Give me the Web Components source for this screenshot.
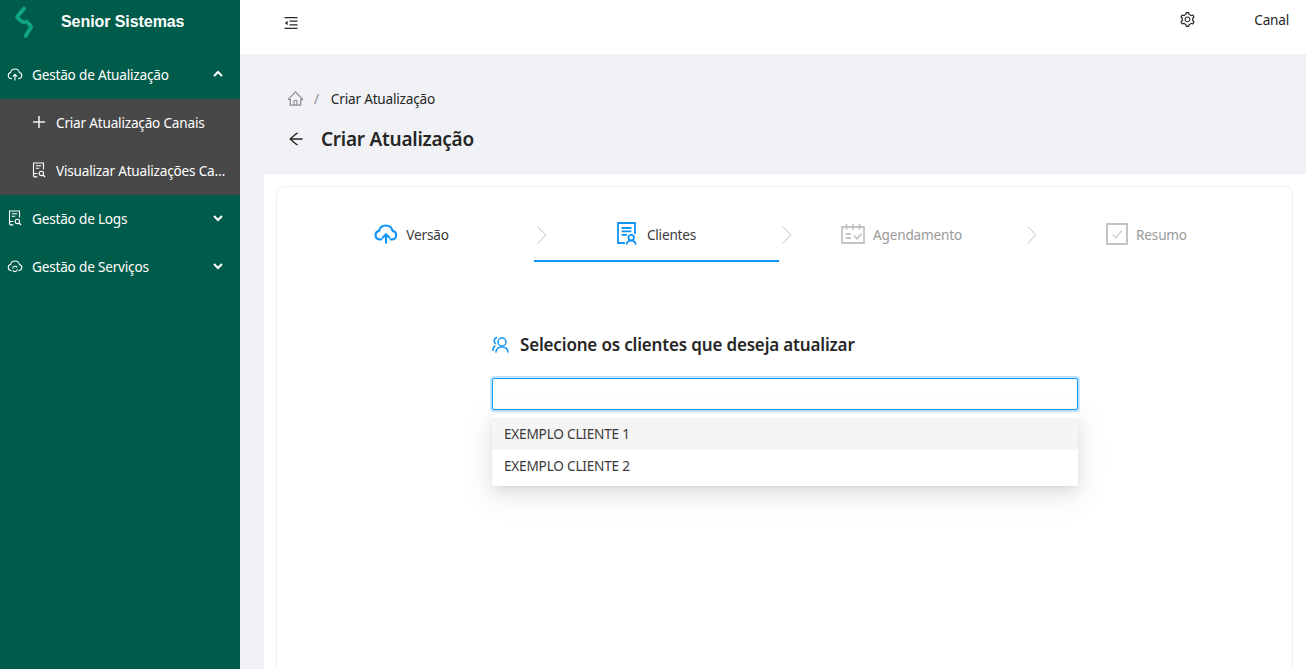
<!DOCTYPE html>
<html lang="pt-BR">
<head>
<meta charset="utf-8">
<title>Criar Atualização</title>
<style>
  html, body { margin: 0; height: 100%; overflow: hidden; }
  body { font-family: "Noto Sans", "Liberation Sans", sans-serif; font-size: 13.6px; letter-spacing: -0.2px; }
</style>
</head>
<body>
<app-shell>
  <side-menu slot="side">
    <menu-group icon="cloud" label="Gestão de Atualização" open>
      <menu-item icon="plus">Criar Atualização Canais</menu-item>
      <menu-item icon="logs">Visualizar Atualizações Canais</menu-item>
    </menu-group>
    <menu-group icon="logs" label="Gestão de Logs"></menu-group>
    <menu-group icon="service" label="Gestão de Serviços"></menu-group>
  </side-menu>
  <top-bar slot="top"></top-bar>
  <page-head slot="head"></page-head>
  <step-nav>
    <step-item icon="cloud-up" state="done">Versão</step-item>
    <step-item icon="client" state="active" gap="10">Clientes</step-item>
    <step-item icon="calendar">Agendamento</step-item>
    <step-item icon="check" last>Resumo</step-item>
  </step-nav>
  <client-picker>
    <picker-option hover>EXEMPLO CLIENTE 1</picker-option>
    <picker-option>EXEMPLO CLIENTE 2</picker-option>
  </client-picker>
</app-shell>

<script>
const ICONS = {
  cloud: `<svg viewBox="0 0 16 16" fill="none" stroke="currentColor" stroke-width="1.1"><path d="M4.8 12.6H4.2A3.1 3.1 0 0 1 3.6 6.5 4.5 4.5 0 0 1 12.4 6.5 3.1 3.1 0 0 1 11.8 12.6H11.2"/><path d="M8 14.4V8.6M5.9 10.6 8 8.4l2.1 2.2"/></svg>`,
  service: `<svg viewBox="0 0 16 16" fill="none" stroke="currentColor" stroke-width="1.1"><path d="M4.4 12.6H4.2A3.1 3.1 0 0 1 3.6 6.5 4.5 4.5 0 0 1 12.4 6.5 3.1 3.1 0 0 1 11.8 12.6H11.6"/><path d="M5.6 10.6A2.5 2.5 0 0 1 10.2 9.4M10.4 11.2A2.5 2.5 0 0 1 5.8 12.4"/></svg>`,
  plus: `<svg viewBox="0 0 16 16" fill="currentColor"><path d="M7.3 2h1.4v12H7.3z"/><path d="M2 7.3h12v1.4H2z"/></svg>`,
  logs: `<svg viewBox="0 0 16 16" fill="none" stroke="currentColor" stroke-width="1.1"><path d="M6.4 14.9H3.9A1.4 1.4 0 0 1 2.5 13.5V1h10v6.4"/><path d="M2.5 12.8A1.4 1.4 0 0 1 3.9 11.5H6.4M4.8 3.8h5.4M4.8 6.2h3.4"/><circle cx="10.4" cy="11.4" r="2.2"/><path d="M12 13 14 15"/></svg>`,
  fold: `<svg viewBox="0 0 14 12" fill="none" stroke="currentColor" stroke-width="1.3"><path d="M.5 .7h13M5.5 4.2h8M5.5 7.8h8M.5 11.3h13"/><path d="M3.6 3.8 .9 6l2.7 2.2z" fill="currentColor" stroke="none"/></svg>`,
  home: `<svg viewBox="64 64 896 896" fill="currentColor"><path d="M946.5 505L560.1 118.8l-25.9-25.9a31.5 31.5 0 0 0-44.4 0L77.5 505a63.9 63.9 0 0 0-18.8 46c.4 35.2 29.7 63.3 64.9 63.3h42.5V940h691.8V614.3h43.4c17.1 0 33.2-6.7 45.3-18.8a63.6 63.6 0 0 0 18.7-45.3c0-17-6.7-33.1-18.8-45.2zM568 868H456V664h112v204zm217.9-325.7V868H632V640c0-22.1-17.9-40-40-40H432c-22.1 0-40 17.9-40 40v228H238.1V542.3h-96l370-369.7 23.1 23.1L882 542.3h-96.1z"/></svg>`,
  back: `<svg viewBox="64 64 896 896" fill="currentColor"><path d="M872 474H286.9l350.2-304c5.6-4.9 2.2-14-5.2-14h-88.5c-3.9 0-7.6 1.4-10.5 3.9L155 487.8a31.96 31.96 0 0 0 0 48.3L535.1 866c1.5 1.3 3.3 2 5.2 2h91.5c7.4 0 10.8-9.2 5.2-14L286.9 550H872c4.4 0 8-3.6 8-8v-60c0-4.4-3.6-8-8-8z"/></svg>`,
  gear: `<svg viewBox="64 64 896 896" fill="currentColor"><path d="M924.8 625.7l-65.5-56c3.1-19 4.7-38.4 4.7-57.8s-1.6-38.8-4.7-57.8l65.5-56a32.03 32.03 0 0 0 9.3-35.2l-.9-2.6a443.74 443.74 0 0 0-79.7-137.9l-1.8-2.1a32.12 32.12 0 0 0-35.1-9.5l-81.3 28.9c-30-24.6-63.5-44-99.7-57.6l-15.7-85a32.05 32.05 0 0 0-25.8-25.7l-2.7-.5c-52.1-9.4-106.9-9.4-159 0l-2.7.5a32.05 32.05 0 0 0-25.8 25.7l-15.8 85.4a351.86 351.86 0 0 0-99 57.4l-81.9-29.1a32 32 0 0 0-35.1 9.5l-1.8 2.1a446.02 446.02 0 0 0-79.7 137.9l-.9 2.6c-4.5 12.5-.8 26.5 9.3 35.2l66.3 56.6c-3.1 18.8-4.6 38-4.6 57.1 0 19.2 1.5 38.4 4.6 57.1L99 625.5a32.03 32.03 0 0 0-9.3 35.2l.9 2.6c18.1 50.4 44.9 96.9 79.7 137.9l1.8 2.1a32.12 32.12 0 0 0 35.1 9.5l81.9-29.1c29.8 24.5 63.1 43.9 99 57.4l15.8 85.4a32.05 32.05 0 0 0 25.8 25.7l2.7.5a449.4 449.4 0 0 0 159 0l2.7-.5a32.05 32.05 0 0 0 25.8-25.7l15.7-85a350 350 0 0 0 99.7-57.6l81.3 28.9a32 32 0 0 0 35.1-9.5l1.8-2.1c34.8-41.1 61.6-87.5 79.7-137.9l.9-2.6c4.5-12.3.8-26.3-9.3-35zM788.3 465.9c2.5 15.1 3.8 30.6 3.8 46.1s-1.3 31-3.8 46.1l-6.6 40.1 74.7 63.9a370.03 370.03 0 0 1-42.6 73.6L721 702.8l-31.4 25.8c-23.9 19.6-50.5 35-79.3 45.8l-38.1 14.3-17.9 97a377.5 377.5 0 0 1-85 0l-17.9-97.2-37.8-14.5c-28.5-10.8-55-26.2-78.7-45.7l-31.4-25.9-93.4 33.2c-17-22.9-31.2-47.6-42.6-73.6l75.5-64.5-6.5-40c-2.4-14.9-3.7-30.3-3.7-45.5 0-15.3 1.2-30.6 3.7-45.5l6.5-40-75.5-64.5c11.3-26.1 25.6-50.7 42.6-73.6l93.4 33.2 31.4-25.9c23.7-19.5 50.2-34.9 78.7-45.7l37.9-14.3 17.9-97.2c28.1-3.2 56.8-3.2 85 0l17.9 97 38.1 14.3c28.7 10.8 55.4 26.2 79.3 45.8l31.4 25.8 92.8-32.9c17 22.9 31.2 47.6 42.6 73.6L781.8 426l6.5 39.9zM512 326c-97.2 0-176 78.8-176 176s78.8 176 176 176 176-78.8 176-176-78.8-176-176-176zm79.2 255.2A111.6 111.6 0 0 1 512 614c-29.9 0-58-11.7-79.2-32.8A111.6 111.6 0 0 1 400 502c0-29.9 11.7-58 32.8-79.2C454 401.6 482.1 390 512 390c29.9 0 58 11.6 79.2 32.8A111.6 111.6 0 0 1 624 502c0 29.9-11.7 58-32.8 79.2z"/></svg>`,
  "cloud-up": `<svg viewBox="0 0 24 20" fill="none" stroke="currentColor" stroke-width="2.1" stroke-linecap="round" stroke-linejoin="round"><path d="M7.4 15.4H5.6A4.3 4.3 0 0 1 5 6.9 7 7 0 0 1 18.6 6.9 4.3 4.3 0 0 1 18.4 15.4H16.6"/><path d="M12 18.8V10.4M8.8 13.4 12 10.2l3.2 3.2"/></svg>`,
  client: `<svg viewBox="0 0 20 23" fill="none" stroke="currentColor" stroke-width="1.8"><path d="M8 21H1V1h17v11"/><path d="M4.6 6h9.8M4.6 9.4h9.8M4.6 12.8h5.4"/><circle cx="14.2" cy="15.6" r="2.8"/><path d="M9.6 22.6c.3-2.7 2-3.9 4.6-3.9s4.3 1.2 4.6 3.9"/></svg>`,
  calendar: `<svg viewBox="0 0 24 20" fill="none" stroke="currentColor" stroke-width="1.8"><path d="M1 3h22v16H1z"/><path d="M5.5 0v5.4M12 0v5.4M18.5 0v5.4" stroke-dasharray="2.2 1.4"/><path d="M4.6 10h5.4M4.6 14h5.4"/><path d="m13 11.6 3 3 4.6-5"/></svg>`,
  check: `<svg viewBox="0 0 22 22" fill="none" stroke="currentColor"><path d="M1 1h20v20H1z" stroke-width="2"/><path d="m6.6 11.4 3.2 3.4 6-7" stroke-width="1.1"/></svg>`,
  people: `<svg viewBox="0 0 18 18" fill="none" stroke="currentColor" stroke-width="1.5"><circle cx="10" cy="6" r="4"/><path d="M3.8 16.6c.4-3.8 2.6-5.6 6.2-5.6s5.8 1.8 6.2 5.6"/><path d="M5.2 1.4C2.8 2 2 4 2.4 5.8c.2.8.6 1.6 1.2 2.2M.8 15c0-2.6 1-4.4 2.6-5.4"/></svg>`,
  up: `<svg viewBox="0 0 12 12" fill="none" stroke="currentColor" stroke-width="2"><path d="M2 8 6 4l4 4"/></svg>`,
  down: `<svg viewBox="0 0 12 12" fill="none" stroke="currentColor" stroke-width="2"><path d="M2 4l4 4 4-4"/></svg>`,
  sep: `<svg viewBox="0 0 10 18" fill="none" stroke="currentColor" stroke-width="1"><path d="m.8.6 8 8.4-8 8.4"/></svg>`
};

class UiIcon extends HTMLElement {
  connectedCallback() {
    const size = this.getAttribute('size') || 14;
    const height = this.getAttribute('height') || size;
    this.attachShadow({mode: 'open'}).innerHTML = `
      <style>
        :host { display: inline-flex; flex: none; width: ${size}px; height: ${height}px; }
        svg { width: 100%; height: 100%; display: block; }
      </style>
      ${ICONS[this.getAttribute('name')]}`;
  }
}

class AppShell extends HTMLElement {
  constructor() {
    super();
    this.attachShadow({mode: 'open'}).innerHTML = `
      <style>
        :host { display: grid; grid-template-columns: 240px 1fr; height: 669px; overflow: hidden; background: #f0f2f5; }
        .main { display: flex; flex-direction: column; min-width: 0; }
        .body { flex: 1; min-height: 0; overflow: hidden; margin-left: 24px; padding: 12px 13px 0 12px; background: #fff; }
        .card { height: calc(100% + 20px); box-sizing: border-box; padding: 20px 12px 0 12px; border: 1px solid #f0f0f0; border-radius: 8px; background: #fff; }
      </style>
      <slot name="side"></slot>
      <div class="main">
        <slot name="top"></slot>
        <slot name="head"></slot>
        <div class="body"><div class="card"><slot></slot></div></div>
      </div>`;
  }
}

class SideMenu extends HTMLElement {
  constructor() {
    super();
    this.attachShadow({mode: 'open'}).innerHTML = `
      <style>
        :host { display: block; background: #005c4a; color: #fff; }
        .brand { height: 51px; display: flex; align-items: flex-start; box-sizing: border-box; padding: 6px 0 0 14px; }
        .brand svg { width: 20px; height: 33px; flex: none; }
        .brand span { margin: 7px 0 0 27px; font: bold 16px "Liberation Sans", Arial, sans-serif; line-height: 18px; letter-spacing: -0.07px; }
      </style>
      <div class="brand">
        <svg viewBox="0 0 20 33" fill="none" stroke="#0fa683" stroke-width="3.8" stroke-linecap="round" stroke-linejoin="round"><path d="M10 2.5 3.8 10Q2.8 11.4 4 12.4L9.6 16.5"/><path d="M12.4 15.5 16.4 19.6Q17.4 20.8 16.6 22L11.6 30"/></svg>
        <span>Senior Sistemas</span>
      </div>
      <slot></slot>`;
  }
}

class MenuGroup extends HTMLElement {
  connectedCallback() {
    const open = this.hasAttribute('open');
    this.attachShadow({mode: 'open'}).innerHTML = `
      <style>
        :host { display: block; }
        .row { height: 48px; display: flex; align-items: center; padding: 0 16px 2px 7px; box-sizing: border-box; gap: 9px; color: #fff; }
        .label { flex: 1; white-space: nowrap; }
        .sub { background: #484848; }
      </style>
      <div class="row">
        <ui-icon name="${this.getAttribute('icon')}" size="16"></ui-icon>
        <span class="label">${this.getAttribute('label')}</span>
        <ui-icon name="${open ? 'up' : 'down'}" size="12"></ui-icon>
      </div>
      <div class="sub"><slot></slot></div>`;
  }
}

class MenuItem extends HTMLElement {
  connectedCallback() {
    this.attachShadow({mode: 'open'}).innerHTML = `
      <style>
        :host { display: block; }
        .row { height: 48px; display: flex; align-items: center; padding: 0 8px 2px 31px; box-sizing: border-box; gap: 9px; color: #fff; }
        .label { flex: 1; min-width: 0; white-space: nowrap; overflow: hidden; text-overflow: ellipsis; }
      </style>
      <div class="row">
        <ui-icon name="${this.getAttribute('icon')}" size="16"></ui-icon>
        <span class="label"><slot></slot></span>
      </div>`;
  }
}

class TopBar extends HTMLElement {
  constructor() {
    super();
    this.attachShadow({mode: 'open'}).innerHTML = `
      <style>
        :host { display: flex; height: 54px; background: #fff; box-sizing: border-box; padding: 0 17px 8px 44px; align-items: center; color: #262626; }
        .gear { margin-left: auto; margin-top: -7px; }
        .user { margin-left: 59px; margin-top: -8px; }
      </style>
      <ui-icon name="fold" size="14" height="12"></ui-icon>
      <ui-icon class="gear" name="gear" size="15"></ui-icon>
      <span class="user">Canal</span>`;
  }
}

class PageHead extends HTMLElement {
  constructor() {
    super();
    this.attachShadow({mode: 'open'}).innerHTML = `
      <style>
        :host { display: block; height: 120px; box-sizing: border-box; padding: 34px 0 0 48px; background: #f0f2f5; color: #262626; }
        .crumbs { display: flex; align-items: center; height: 20px; }
        .crumbs ui-icon { color: #8c8c8c; }
        .crumbs i { font-style: normal; color: #8c8c8c; margin: 0 12px 0 11px; }
        .title { display: flex; align-items: center; gap: 17px; margin-top: 17px; height: 28px; }
        h1 { margin: 0; font-size: 19px; font-weight: 600; line-height: 28px; letter-spacing: -0.25px; }
      </style>
      <div class="crumbs"><ui-icon name="home" size="15"></ui-icon><i>/</i><span>Criar Atualização</span></div>
      <div class="title"><ui-icon name="back" size="16"></ui-icon><h1>Criar Atualização</h1></div>`;
  }
}

class StepNav extends HTMLElement {
  constructor() {
    super();
    this.attachShadow({mode: 'open'}).innerHTML = `
      <style>
        :host { display: grid; grid-template-columns: repeat(4, 245px); }
      </style>
      <slot></slot>`;
  }
}

class StepItem extends HTMLElement {
  connectedCallback() {
    const state = this.getAttribute('state');
    const tone = state ? '#0f96f8' : '#c4c4c4';
    const text = state ? '#3a3a3a' : '#9a9a9a';
    const sizes = { 'cloud-up': [24, 20], client: [20, 23], calendar: [24, 20], check: [22, 22] };
    const [w, h] = sizes[this.getAttribute('icon')];
    this.attachShadow({mode: 'open'}).innerHTML = `
      <style>
        :host { display: block; position: relative; height: 55px; box-sizing: border-box; }
        .inner { height: 53px; box-sizing: content-box; display: flex; align-items: center; justify-content: center; gap: ${this.getAttribute('gap') || 8}px; color: ${text}; border-bottom: 2px solid ${state === 'active' ? '#0f96f8' : 'transparent'}; }
        .text { padding-top: 2px; }
        ui-icon { color: ${tone}; }
        .sep { position: absolute; left: 248px; top: 19px; color: #c4c4c4; z-index: 1; }
      </style>
      <div class="inner">
        <ui-icon name="${this.getAttribute('icon')}" size="${w}" height="${h}"></ui-icon>
        <span class="text"><slot></slot></span>
      </div>
      ${this.hasAttribute('last') ? '' : '<ui-icon class="sep" name="sep" size="10" height="18"></ui-icon>'}`;
  }
}

class ClientPicker extends HTMLElement {
  constructor() {
    super();
    this.attachShadow({mode: 'open'}).innerHTML = `
      <style>
        :host { display: block; width: 586px; margin: 71px 0 0 203px; position: relative; }
        h2 { display: flex; align-items: center; gap: 10px; margin: 0 0 21px; font-size: 17px; font-weight: 600; line-height: 24px; letter-spacing: -0.17px; color: #262626; }
        h2 ui-icon { color: #0f96f8; }
        input { display: block; box-sizing: border-box; width: 100%; height: 32px; border: 1px solid #0f9bff; border-radius: 2px; outline: none; background: #fff; box-shadow: 0 0 0 2px rgba(0,150,255,.25); }
        .drop { position: absolute; left: 0; right: 0; top: 81px; padding: 4px 0; background: #fff; border-radius: 2px; box-shadow: 0 3px 6px -4px rgba(0,0,0,.12), 0 6px 16px 0 rgba(0,0,0,.08), 0 9px 28px 8px rgba(0,0,0,.05); }
      </style>
      <h2><ui-icon name="people" size="18"></ui-icon>Selecione os clientes que deseja atualizar</h2>
      <input type="text" aria-label="Clientes">
      <div class="drop"><slot></slot></div>`;
  }
}

class PickerOption extends HTMLElement {
  constructor() {
    super();
    this.attachShadow({mode: 'open'}).innerHTML = `
      <style>
        :host { display: block; height: 32px; line-height: 32px; padding: 0 12px; color: #3a3a3a; }
        :host([hover]) { background: #f5f5f5; }
      </style>
      <slot></slot>`;
  }
}

customElements.define('ui-icon', UiIcon);
customElements.define('app-shell', AppShell);
customElements.define('side-menu', SideMenu);
customElements.define('menu-group', MenuGroup);
customElements.define('menu-item', MenuItem);
customElements.define('top-bar', TopBar);
customElements.define('page-head', PageHead);
customElements.define('step-nav', StepNav);
customElements.define('step-item', StepItem);
customElements.define('client-picker', ClientPicker);
customElements.define('picker-option', PickerOption);
</script>
</body>
</html>
